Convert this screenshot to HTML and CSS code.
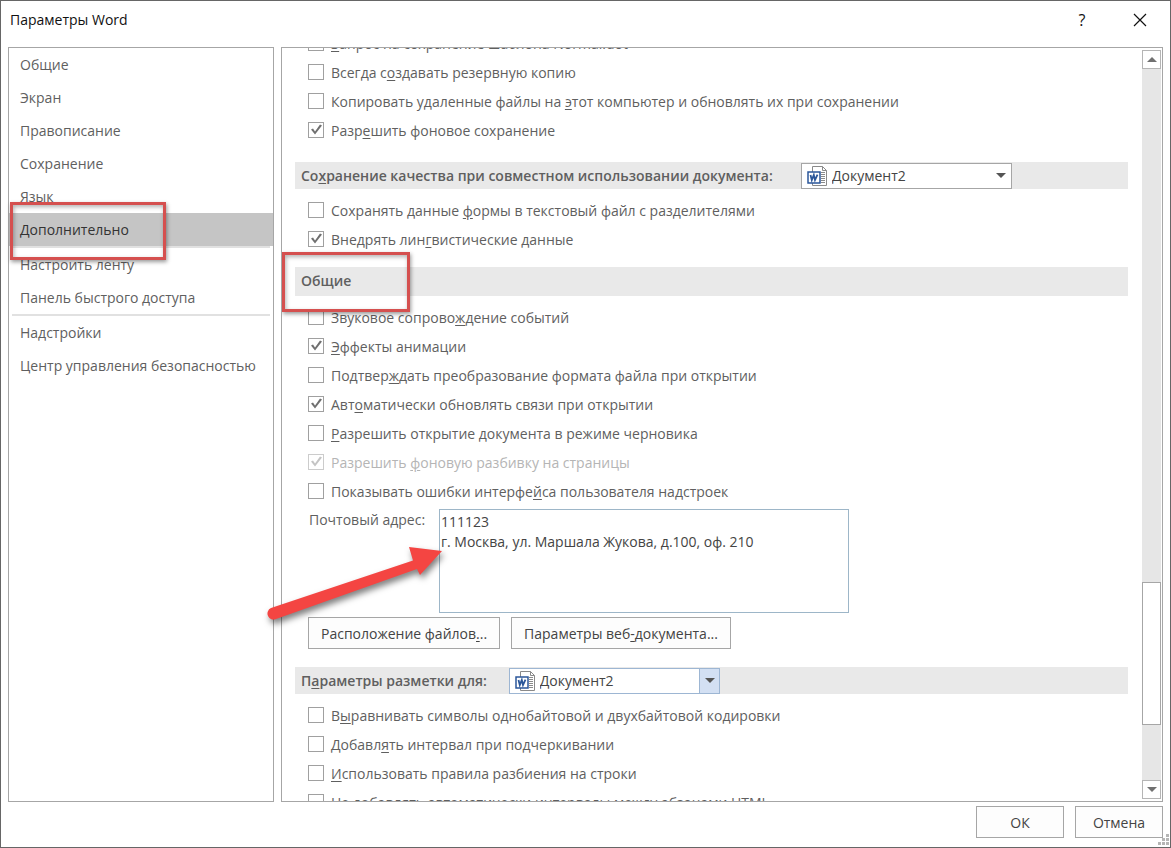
FILE: index.html
```html
<!DOCTYPE html>
<html lang="ru">
<head>
    <meta charset="UTF-8">
    <meta name="viewport" content="width=device-width, initial-scale=1.0">
    <title>Параметры Word</title>
    <link rel="stylesheet" href="styles.css">
</head>
<body>
    <!-- Shared icons -->
    <svg class="defs" width="0" height="0">
        <symbol id="word-doc" viewBox="0 0 20 20">
            <path d="M5.5 .5h10l4 4v15h-14z" fill="#fff" stroke="#8a8a8a"/>
            <path d="M15.500 .5v4h4" fill="none" stroke="#8a8a8a"/>
            <path d="M14 6.500h4M14 8.500h4M14 10.500h4M14 12.500h4M14 14.500h4M14 16.500h4" stroke="#8a8a8a"/>
            <path d="M1 6h12v11H1z" fill="#fff" stroke="#2b579a" stroke-width="1.500"/>
            <path d="M3.500 9l1.300 5 2-5 1.200 5 2.500-5.300" fill="none" stroke="#2b579a" stroke-width="1.800"/>
        </symbol>
    </svg>

    <header class="titlebar">
        <h1>Параметры Word</h1>
        <button class="title-btn" aria-label="Справка">?</button>
        <button class="title-btn" aria-label="Закрыть">
            <svg width="14" height="14" viewBox="0 0 14 14"><path d="M1 1l12 12M13 1L1 13" stroke="#111" stroke-width="1.200"/></svg>
        </button>
    </header>

    <main class="main">
        <nav class="sidebar">
            <a href="#">Общие</a>
            <a href="#">Экран</a>
            <a href="#">Правописание</a>
            <a href="#">Сохранение</a>
            <a href="#">Язык</a>
            <a href="#" class="active">Дополнительно<span class="mark mark-nav"></span></a>
            <hr>
            <a href="#">Настроить ленту</a>
            <a href="#">Панель быстрого доступа</a>
            <hr>
            <a href="#">Надстройки</a>
            <a href="#">Центр управления безопасностью</a>
        </nav>

        <div class="panel">
            <div class="options">
                <section class="scrolled">
                    <label class="row"><input type="checkbox"><span><u>З</u>апрос на сохранение шаблона Normal.dot</span></label>
                    <label class="row"><input type="checkbox"><span>Всегда с<u>о</u>здавать резервную копию</span></label>
                    <label class="row"><input type="checkbox"><span>Копировать удаленные файлы на <u>э</u>тот компьютер и обновлять их при сохранении</span></label>
                    <label class="row"><input type="checkbox" checked><span>Разр<u>е</u>шить фоновое сохранение</span></label>
                </section>

                <section>
                    <h2>
                        <label class="wide" for="share-doc">Со<u>х</u>ранение качества при совместном использовании документа:</label>
                        <span class="combo">
                            <svg class="doc-icon"><use href="#word-doc"/></svg>
                            <select id="share-doc"><option>Документ2</option></select>
                            <span class="arrow"></span>
                        </span>
                    </h2>
                    <label class="row"><input type="checkbox"><span>Сохранять данные <u>ф</u>ормы в текстовый файл с разделителями</span></label>
                    <label class="row"><input type="checkbox" checked><span>Внедрять лин<u>г</u>вистические данные</span></label>
                </section>

                <section class="general">
                    <h2>Общие<span class="mark mark-general"></span></h2>
                    <label class="row"><input type="checkbox"><span>Звуковое сопрово<u>ж</u>дение событий</span></label>
                    <label class="row"><input type="checkbox" checked><span><u>Э</u>ффекты анимации</span></label>
                    <label class="row"><input type="checkbox"><span>Подтвер<u>ж</u>дать преобразование формата файла при открытии</span></label>
                    <label class="row"><input type="checkbox" checked><span>Авт<u>о</u>матически обновлять связи при открытии</span></label>
                    <label class="row"><input type="checkbox"><span><u>Р</u>азрешить открытие документа в режиме черновика</span></label>
                    <label class="row disabled"><input type="checkbox" checked disabled><span>Разрешить <u>ф</u>оновую разбивку на страницы</span></label>
                    <label class="row"><input type="checkbox"><span>Показывать ошибки интерфе<u>й</u>са пользователя надстроек</span></label>
                    <div class="address">
                        <label for="address">Почтовый а<u>д</u>рес:</label>
                        <textarea id="address" spellcheck="false">111123
г. Москва, ул. Маршала Жукова, д.100, оф. 210</textarea>
                    </div>
                    <div class="buttons">
                        <button class="btn">Расположение файлов<u>.</u>..</button>
                        <button class="btn">Параметры веб<u>-</u>документа...</button>
                    </div>
                </section>

                <section>
                    <h2>
                        <label for="layout-doc">П<u>а</u>раметры разметки для:</label>
                        <span class="combo hot">
                            <svg class="doc-icon"><use href="#word-doc"/></svg>
                            <select id="layout-doc"><option>Документ2</option></select>
                            <span class="arrow"></span>
                        </span>
                    </h2>
                    <label class="row"><input type="checkbox"><span>В<u>ы</u>равнивать символы однобайтовой и двухбайтовой кодировки</span></label>
                    <label class="row"><input type="checkbox"><span>Добавл<u>я</u>ть интервал при подчеркивании</span></label>
                    <label class="row"><input type="checkbox"><span><u>И</u>спользовать правила разбиения на строки</span></label>
                    <label class="row"><input type="checkbox"><span>Не добавлять автоматически интервалы между абзацами HTML</span></label>
                </section>
            </div>

            <div class="scrollbar">
                <button class="scroll-btn up" aria-label="Вверх"></button>
                <div class="track"><div class="thumb"></div></div>
                <button class="scroll-btn down" aria-label="Вниз"></button>
            </div>
        </div>

        <svg class="pointer" width="190" height="90" viewBox="0 0 190 90">
            <path d="M5 69L147 21.500L143 8L176 12L154 36L151 30L10 80A5.500 5.500 0 0 1 5 69z" fill="#f44542"/>
        </svg>
    </main>

    <footer class="footer">
        <button class="btn">ОК</button>
        <button class="btn">Отмена</button>
        <svg class="grip" width="11" height="11" viewBox="0 0 11 11">
            <path d="M8 0h3v3H8zM4 4h3v3H4zM8 4h3v3H8zM0 8h3v3H0zM4 8h3v3H4zM8 8h3v3H8z" fill="#b5b5b5"/>
        </svg>
    </footer>
</body>
</html>
```
FILE: styles.css
```css
/* General Reset */
* {
    margin: 0;
    padding: 0;
    box-sizing: border-box;
}
body {
    display: flex;
    flex-direction: column;
    height: 100vh;
    border: 1px solid #666666;
    background-color: #ffffff;
    color: #5f5f5f;
    font-family: 'Open Sans', 'Noto Sans', sans-serif;
    font-size: 14px;
    line-height: 20px;
}
button, select, textarea {
    font: inherit;
    color: #444444;
}
u {
    text-underline-offset: 2px;
}
.defs {
    position: absolute;
}
/* Title bar */
.titlebar {
    display: flex;
    align-items: center;
    height: 46px;
    padding: 0 16px 9px 9px;
}
.titlebar h1 {
    flex: 1;
    font-size: 14px;
    font-weight: normal;
    color: #111111;
}
.title-btn {
    display: flex;
    align-items: center;
    justify-content: center;
    width: 28px;
    height: 28px;
    margin-left: 30px;
    border: none;
    background: none;
    color: #111111;
    font-size: 16px;
}
.main {
    position: relative;
    display: flex;
    flex: 1;
    gap: 7px;
    min-height: 0;
    padding: 0 7px;
}
/* Sidebar */
.sidebar {
    flex: none;
    width: 266px;
    border: 1px solid #a6a6a6;
}
.sidebar a {
    position: relative;
    display: block;
    padding: 7px 11px 6px;
    color: #5f5f5f;
    text-decoration: none;
    white-space: nowrap;
}
.sidebar a.active {
    background-color: #c5c5c5;
    color: #333333;
}
.sidebar hr {
    height: 2px;
    margin: 0 3px;
    border: none;
    background-color: #e1e1e1;
}
/* Red frames */
.mark {
    position: absolute;
    z-index: 2;
    border: 3px solid #d5504f;
    box-shadow: 1px 2px 4px rgba(0, 0, 0, 0.4), inset 1px 2px 4px rgba(0, 0, 0, 0.3);
}
.mark-nav {
    top: -11px;
    left: 1px;
    width: 156px;
    height: 58px;
}
.mark-general {
    top: -15px;
    left: -13px;
    width: 128px;
    height: 60px;
}
/* Options */
.panel {
    display: flex;
    flex: 1;
    min-width: 0;
    border: 1px solid #a6a6a6;
}
.options {
    flex: 1;
    min-width: 0;
    overflow: hidden;
    padding: 0 14px 0 13px;
}
.options section {
    margin-top: 18px;
}
.options .scrolled {
    margin-top: -20px;
}
.options .general {
    margin-top: 14px;
}
.options h2 {
    position: relative;
    display: flex;
    align-items: center;
    height: 27px;
    margin-bottom: 6px;
    padding-left: 6px;
    background-color: #e9e9e9;
    font-size: 14px;
    font-weight: 600;
    white-space: nowrap;
}
.options h2 .wide {
    width: 478px;
}
.options .general h2 {
    height: 29px;
    padding-bottom: 2px;
}
.row {
    display: flex;
    align-items: center;
    gap: 7px;
    height: 29px;
    padding-left: 13px;
    white-space: nowrap;
}
.row span {
    padding-top: 2px;
}
.row.disabled {
    color: #b5b5b5;
}
input[type="checkbox"] {
    appearance: none;
    flex: none;
    width: 16px;
    height: 16px;
    border: 1px solid #a0a0a0;
    background-color: #ffffff;
}
input[type="checkbox"]:checked::before {
    content: "";
    display: block;
    width: 14px;
    height: 14px;
    background-color: #707070;
    clip-path: polygon(2px 7px, 4px 6px, 6px 9px, 11px 2px, 13px 3px, 6px 12px);
}
input[type="checkbox"]:disabled {
    border-color: #cccccc;
}
input[type="checkbox"]:disabled::before {
    background-color: #c4c4c4;
}
/* Drop-downs */
.combo {
    position: relative;
    width: 211px;
    height: 26px;
    margin-left: 22px;
}
.combo select {
    appearance: none;
    display: block;
    width: 100%;
    height: 26px;
    padding-left: 30px;
    border: 1px solid #a6a6a6;
    border-radius: 0;
    background-color: #ffffff;
    font-weight: normal;
}
.doc-icon {
    position: absolute;
    top: 3px;
    left: 6px;
    width: 20px;
    height: 20px;
}
.combo .arrow {
    position: absolute;
    top: 1px;
    right: 1px;
    width: 20px;
    height: 24px;
    pointer-events: none;
}
.combo .arrow::before {
    content: "";
    position: absolute;
    top: 9px;
    left: 5px;
    border: 5px solid transparent;
    border-top-color: #555555;
    border-bottom: none;
}
.combo.hot select {
    border-color: #9db6d3;
}
.combo.hot .arrow {
    border-left: 1px solid #9db6d3;
    background-color: #d3e0f3;
}
/* Address */
.address {
    display: flex;
    gap: 11px;
    padding: 4px 0 0 14px;
}
.address label {
    width: 119px;
    padding-top: 1px;
    white-space: nowrap;
}
.address textarea {
    width: 410px;
    height: 104px;
    padding: 2px 1px;
    border: 1px solid #9db6c8;
    outline: none;
    resize: none;
    overflow: hidden;
}
/* Buttons */
.buttons {
    display: flex;
    gap: 11px;
    padding: 4px 0 0 13px;
}
.btn {
    height: 32px;
    padding: 1px 12px 0;
    border: 1px solid #a6a6a6;
    background-color: #fdfdfd;
    white-space: nowrap;
}
/* Scrollbar */
.scrollbar {
    display: flex;
    flex-direction: column;
    width: 20px;
    padding: 2px 1px 2px 0;
}
.scroll-btn {
    display: flex;
    align-items: center;
    justify-content: center;
    height: 19px;
    border: 1px solid #b5b5b5;
    background-color: #ffffff;
}
.scroll-btn::before {
    content: "";
    border: 5px solid transparent;
}
.scroll-btn.up::before {
    border-top: none;
    border-bottom-color: #707070;
}
.scroll-btn.down::before {
    border-bottom: none;
    border-top-color: #707070;
}
.track {
    display: flex;
    flex-direction: column;
    flex: 1;
    background-color: #e6e6e6;
}
.track::before {
    content: "";
    flex: 514;
}
.track::after {
    content: "";
    flex: 55;
}
.thumb {
    flex: 142;
    border: 1px solid #a6a6a6;
    background-color: #ffffff;
}
.pointer {
    position: absolute;
    top: 492px;
    left: 265px;
    overflow: visible;
    filter: drop-shadow(2px 4px 3px rgba(0, 0, 0, 0.5));
    pointer-events: none;
}
/* Footer */
.footer {
    position: relative;
    display: flex;
    justify-content: flex-end;
    gap: 11px;
    padding: 4px 7px 9px;
}
.footer .btn {
    width: 88px;
}
.grip {
    position: absolute;
    right: 1px;
    bottom: 2px;
}
```
